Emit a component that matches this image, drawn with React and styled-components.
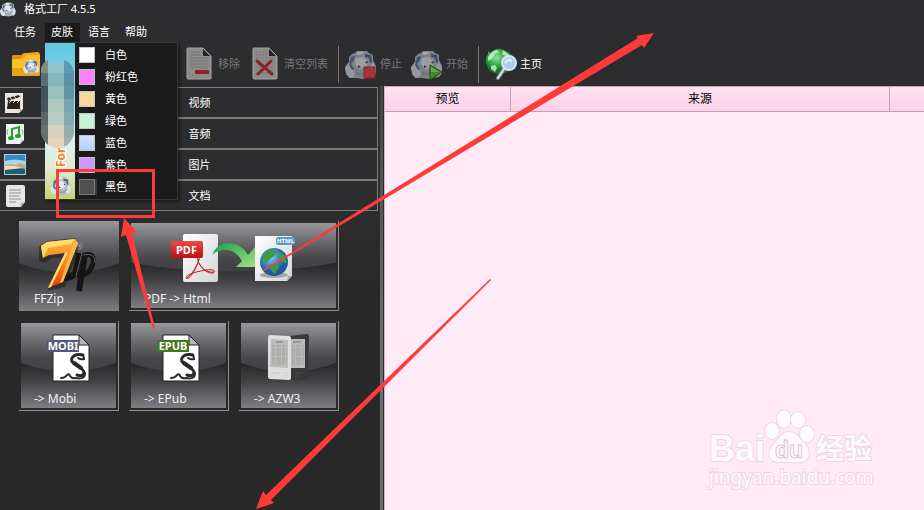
import React, {useState} from 'react'
import styled, {createGlobalStyle, css} from 'styled-components';

const GlobalStyle = createGlobalStyle`
  * {
    box-sizing: border-box;
  }
  body {
    margin: 0;
    background: #2d2d2f;
    font-family: "Noto Sans", "Noto Sans CJK SC", sans-serif;
    font-size: 11px;
    line-height: 16px;
    color: #fff;
  }
  button {
    margin: 0;
    padding: 0;
    border: none;
    background: none;
    color: inherit;
    font: inherit;
    text-align: left;
  }
  svg {
    display: block;
    flex: none;
    overflow: visible;
  }
`

const Window = styled.div`
  position: relative;
  display: flex;
  flex-direction: column;
  min-height: 100vh;
  overflow: hidden;
`
const TitleBar = styled.header`
  display: flex;
  align-items: center;
  gap: 7px;
  height: 18px;
`
const Title = styled.h1`
  margin: 0;
  font-size: 11px;
  font-weight: normal;
`
const MenuBar = styled.nav`
  display: flex;
  height: 24px;
  padding: 5px 0 0 8px;
`
const MenuSlot = styled.div`
  position: relative;
`
const MenuButton = styled.button`
  height: 19px;
  padding: 0 7px 2px 6px;
  margin-right: 2px;
  ${(props) => props.$open && css`
    background: #1b1b1b;
  `}
`
const SkinMenu = styled.div`
  position: absolute;
  z-index: 2;
  top: 19px;
  left: 0;
  display: flex;
  width: 133px;
  background: #1b1b1b;
  border: 1px solid #37373b;
  border-width: 1px 1px 1px 0;
  box-shadow: 2px 2px 3px rgba(0, 0, 0, 0.4);
`
const SkinItems = styled.div`
  flex: 1;
  padding: 1px 0;
`
const SkinItem = styled.button`
  display: flex;
  align-items: center;
  gap: 10px;
  width: 100%;
  height: 22px;
  padding-left: 4px;
`
const Swatch = styled.span`
  width: 16px;
  height: 16px;
  border: 1px solid #c4c4c4;
  background: ${(props) => props.$fill};
  ${(props) => props.$selected && css`
    border-color: #7a7a7a;
    box-shadow: 2px 0 0 #3a3a3a;
  `}
`
const ToolBar = styled.div`
  display: flex;
  align-items: center;
  height: 44px;
  padding-left: 7px;
`
const ToolButton = styled.button`
  display: flex;
  align-items: center;
  gap: 3px;
  padding: 0 6px 0 3px;
  white-space: nowrap;
  &:disabled {
    color: #77777a;
  }
`
const OutputButton = styled(ToolButton)`
  width: 173px;
`
const Separator = styled.span`
  width: 1px;
  height: 37px;
  margin: 0 3px 0 4px;
  background: #77777a;
`
const Main = styled.div`
  display: flex;
  flex: 1;
`
const Side = styled.aside`
  flex: none;
  padding: 1px 2px 0 0;
  width: 380px;
  background: linear-gradient(#2d2d2f 120px, #292929 200px);
`
const Category = styled.button`
  display: grid;
  grid-template-columns: 1fr 1fr;
  align-items: center;
  width: 100%;
  height: 31px;
  border: 1px solid #7c7c7c;
  border-left: none;
`
const CategoryIcon = styled.span`
  padding-left: 4px;
`
const Tiles = styled.div`
  display: grid;
  grid-template-columns: repeat(3, 100px);
  grid-auto-rows: 90px;
  gap: 10px;
  padding: 10px 0 10px 19px;
`
const Tile = styled.button`
  display: flex;
  padding: 2px;
  border: solid #8f8f93;
  border-width: 0 1px 1px 0;
  grid-column: span ${(props) => props.$span || 1};
  ${(props) => props.$active && css`
    padding: 0;
    border: none;
  `}
`
const Face = styled.span`
  position: relative;
  display: flex;
  flex: 1;
  flex-direction: column;
  justify-content: space-between;
  align-self: stretch;
  background: linear-gradient(#2a2a2c 50%, #424245 68%, #7e7e83);
  &::before {
    content: '';
    position: absolute;
    inset: 0;
    background: linear-gradient(#98989c, #6a6a6f 22%, #46464a 42%, #404044 60%);
    clip-path: ellipse(87% 57% at 50% 0);
  }
  svg {
    position: relative;
  }
`
const TileLabel = styled.span`
  position: relative;
  font-size: 12px;
  color: #f0f0f0;
  padding: 0 0 ${(props) => (props.$active ? '4px 15px' : '1px 13px')};
`
const Splitter = styled.div`
  flex: none;
  width: 4px;
  background: linear-gradient(#454547, #6e6e6e 60%);
  border-right: 1px solid #2b2b2b;
`
const Content = styled.main`
  position: relative;
  flex: 1;
  background: #ffeaf6;
  border-left: 1px solid #d9b3c8;
`
const TaskTable = styled.table`
  width: 100%;
  table-layout: fixed;
  border-collapse: separate;
  border-spacing: 0;
`
const Th = styled.th`
  width: ${(props) => props.$width || 'auto'};
  height: 26px;
  padding: 0;
  border: solid #c3a0b3;
  border-width: 1px 1px 1px 0;
  background: linear-gradient(#ffe2f2, #f9d1e6);
  color: #000;
  font-size: 12px;
  font-weight: normal;
  text-align: center;
  &:last-child {
    border-right: none;
  }
`
const Watermark = styled.svg`
  position: absolute;
  right: 34px;
  bottom: 10px;
`
const Blur = styled.svg`
  position: absolute;
  z-index: 3;
  top: 37px;
  left: -4px;
`
const Marks = styled.svg`
  position: absolute;
  z-index: 4;
  top: 0;
  left: 0;
  pointer-events: none;
`

function Mascot({x = 0, y = 0, scale = 1, dim}) {
    return (
        <g transform={`translate(${x} ${y}) scale(${scale})`} opacity={dim ? 0.6 : 1}>
            <path d="M7 4 10 3 12 1 22 1 24 3 28 5 28 10 31 16 31 23 28 27 21 28 18 29 11 28 4 28 1 24 0 17 4 12 4 7Z" fill="#b4bac5" />
            <path d="M4 12 0 18 2 25 7 28 10 24 7 18Z M28 12 31 18 30 24 26 27 23 23 25 17Z" fill="#dfe2e8" />
            <path d="M6 7 10 6 9 10 6 14 9 19 7 20 4 15Z" fill="#4d6f94" />
            <path d="M20 4 26 5 27 12 25 13 24 8 20 7Z" fill="#45648a" />
            <path d="M11 8 18 7 23 12 21 18 14 19 10 14Z" fill="#e8eaee" />
            <path d="M10 21 15 23 21 22 25 18 26 20 21 25 11 25Z" fill="#98a0ae" />
            <path d="M12 2 19 2 17 4 12 5Z" fill="#f8f8fa" />
            <path d="M20 12 23 11 22 14Z M13 15 16 17 13 18Z" fill="#333b45" />
        </g>
    )
}

function AppIcon() {
    return (
        <svg width="17" height="17" viewBox="0 0 17 17">
            <Mascot x={0} y={1} scale={0.5} />
        </svg>
    )
}

function FolderIcon() {
    return (
        <svg width="32" height="32" viewBox="0 0 32 32">
            <path d="M2 8 3 7H11L14 9V28H2Z" fill="#e08b13" />
            <path d="M12 6 15 5H17L27 4Q30 4 30 7V26L4 28Z" fill="#f3a51d" />
            <path d="M2 12Q2 11 4 11H13L17 7H28Q30 7 30 9V26Q30 28 28 28H3Q2 28 2 26Z" fill="#f9c12c" />
            <path d="M2 20H30V26Q30 28 28 28H3Q2 28 2 26Z" fill="#eaa40f" />
            <Mascot x={13} y={11} scale={0.52} />
        </svg>
    )
}

function RemoveIcon() {
    return (
        <svg width="32" height="32" viewBox="0 0 32 32">
            <path d="M5 0H20L28 8V30Q28 31 27 31H5Q4 31 4 30V1Q4 0 5 0Z" fill="#8b8b8c" stroke="#a5a5a5" />
            <path d="M7 4H18M7 7H18M7 10H25M7 13H25M7 16H25M7 19H25" stroke="#757577" />
            <path d="M20 1V8H27Z" fill="#222" />
            <rect x="12" y="22" width="14" height="4" fill="#8c2429" />
        </svg>
    )
}

function ClearIcon() {
    return (
        <svg width="32" height="32" viewBox="0 0 32 32">
            <path d="M5 0H20L28 8V30Q28 31 27 31H5Q4 31 4 30V1Q4 0 5 0Z" fill="#8b8b8c" stroke="#a5a5a5" />
            <path d="M7 4H18M7 7H18M7 10H25M7 13H25M7 16H25M7 19H25M7 22H25M7 25H25" stroke="#757577" strokeDasharray="2 1" />
            <path d="M20 1V8H27Z" fill="#222" />
            <path d="M8 13 23 26M22 13 9 26" stroke="#8c2227" strokeWidth="3" strokeLinecap="round" />
        </svg>
    )
}

function StopIcon() {
    return (
        <svg width="32" height="32" viewBox="0 0 32 32">
            <Mascot y={2} dim />
            <rect x="19" y="19" width="11" height="11" fill="#a73338" stroke="#852529" />
        </svg>
    )
}

function StartIcon() {
    return (
        <svg width="32" height="32" viewBox="0 0 32 32">
            <Mascot y={2} dim />
            <path d="M19 17V32L31 24Z" fill="#3d8f24" stroke="#1d4a14" />
            <path d="M20 19V24H28Z" fill="#6aab4a" />
        </svg>
    )
}

function HomeIcon() {
    return (
        <svg width="32" height="32" viewBox="0 0 32 32">
            <defs>
                <radialGradient id="home" cx="40%" cy="35%">
                    <stop offset="0" stopColor="#8fe29a" />
                    <stop offset="0.6" stopColor="#2fae48" />
                    <stop offset="1" stopColor="#17712c" />
                </radialGradient>
            </defs>
            <path d="M3 3 6 5Q10 0 16 1L24 4Q29 8 28 14 27 24 17 26 5 27 2 18 -1 11 3 6Z" fill="url(#home)" />
            <path d="M3 9Q6 3 12 2L14 4 10 6 7 11 3 13ZM18 2 25 7 22 9 17 6ZM6 18 10 17 12 20 10 24 6 21Z" fill="#d4f5d4" opacity="0.75" />
            <path d="M13 30 19 21" stroke="#7d858c" strokeWidth="4" strokeLinecap="round" />
            <path d="M13 30 19 21" stroke="#d8dde0" strokeWidth="2" strokeLinecap="round" />
            <circle cx="24" cy="15" r="7" fill="#a9cdf0" stroke="#dfe4e8" strokeWidth="2" />
            <path d="M20 15Q23 10 27 13" stroke="#e6f3ff" strokeWidth="2" fill="none" />
        </svg>
    )
}

function VideoIcon() {
    return (
        <svg width="24" height="24" viewBox="0 0 24 24">
            <path d="M1 2H19V18L15 22H1Z" fill="#e9e6e2" />
            <path d="M3 7 15 4 16 6 4 10Z" fill="#33291f" />
            <path d="M4 10H16V18H3Z" fill="#2b211b" />
            <path d="M6 6 8 9M10 5 12 8M5 12 7 10M9 12 11 10M13 12 15 10" stroke="#ddd" />
            <path d="M15 22 16 18H19Z" fill="#bdb8b2" />
        </svg>
    )
}

function AudioIcon() {
    return (
        <svg width="24" height="24" viewBox="0 0 24 24">
            <path d="M2 2H20V18L16 22H2Z" fill="#f2f5f1" />
            <path d="M8 16V7L15 5V14" stroke="#28a032" strokeWidth="2" fill="none" />
            <ellipse cx="7" cy="16" rx="3" ry="2" fill="#28a032" />
            <ellipse cx="14" cy="14" rx="3" ry="2" fill="#28a032" />
            <path d="M4 7Q2 10 4 13M18 7Q20 10 18 13" stroke="#6dc673" fill="none" />
            <path d="M16 22 17 18H20Z" fill="#bcc2ba" />
        </svg>
    )
}

function PictureIcon() {
    return (
        <svg width="24" height="24" viewBox="0 0 24 24">
            <rect x="0" y="1" width="22" height="21" fill="#b9c9d0" />
            <rect x="1" y="2" width="20" height="10" fill="#2d8dcc" />
            <path d="M1 8Q10 5 21 8V12H1Z" fill="#a6d8ef" />
            <path d="M1 12 6 11 12 12 17 10 21 12V16H1Z" fill="#c6a970" />
            <path d="M1 14Q12 13 21 16V21H1Z" fill="#1b5f70" />
            <path d="M1 13Q9 12 19 15L1 17Z" fill="#f1deb0" />
        </svg>
    )
}

function DocIcon() {
    return (
        <svg width="24" height="24" viewBox="0 0 24 24">
            <path d="M4 1H19Q21 1 21 3V18L17 23H4Q2 23 2 21V3Q2 1 4 1Z" fill="#e6e6e6" />
            <path d="M5 6H17M5 9H17M5 12H15M5 15H17M5 18H12" stroke="#929292" />
            <path d="M16 23 17 19 21 18Z" fill="#a9a9a9" />
        </svg>
    )
}

function MenuBanner() {
    return (
        <svg width="30" height="156" viewBox="0 0 30 156">
            <defs>
                <linearGradient id="banner" x2="0" y2="1">
                    <stop offset="0" stopColor="#5fc8e2" />
                    <stop offset="0.3" stopColor="#8ad6e8" />
                    <stop offset="0.6" stopColor="#dceff3" />
                    <stop offset="0.8" stopColor="#e0ebd2" />
                    <stop offset="1" stopColor="#c2d869" />
                </linearGradient>
            </defs>
            <rect width="30" height="156" fill="url(#banner)" />
            <text transform="translate(20 124) rotate(-90)" fontSize="12" fontWeight="bold" fill="#f5821f" stroke="#fff" strokeWidth="2" paintOrder="stroke">For</text>
            <Mascot x={5} y={133} scale={0.68} />
        </svg>
    )
}

function MosaicPatch() {
    const cells = [
        ['#7d8d84', '#8ec3c9', '#5f9bae'],
        ['#586f76', '#86b7bb', '#5b8fa3'],
        ['#40525c', '#97c1bd', '#6294a4'],
        ['#45555b', '#adcabf', '#78a5ad'],
        ['#5a6869', '#b9cdc0', '#84a9b0'],
        ['#69706e', '#d7d2bf', '#95adb3'],
        ['#697173', '#e5d3bd', '#a2afb5'],
    ];
    const xs = [0, 7, 23];
    const widths = [7, 16, 10];
    return (
        <Blur width="33" height="88" viewBox="0 0 33 88">
            <clipPath id="patch">
                <path d="M0 8Q2 2 7 0V3H23V0Q31 2 33 12V74Q29 88 16 88Q4 87 0 74Z" />
            </clipPath>
            <g clipPath="url(#patch)">
                {cells.map((row, r) => row.map((fill, c) => (
                    <rect key={`${r}-${c}`} x={xs[c]} y={r * 13} width={widths[c]} height="13" fill={fill} />
                )))}
            </g>
        </Blur>
    )
}

function ZipArt() {
    return (
        <svg width="100" height="67" viewBox="0 0 100 67">
            <defs>
                <linearGradient id="seven" x2="0" y2="1">
                    <stop offset="0" stopColor="#fbb040" />
                    <stop offset="0.5" stopColor="#f68a1e" />
                    <stop offset="1" stopColor="#e2390f" />
                </linearGradient>
            </defs>
            <path d="M60 32 57 50Q54 58 42 57" fill="none" stroke="#151515" strokeWidth="6" />
            <path d="M66 33 60 70" stroke="#151515" strokeWidth="6" />
            <path d="M62 35Q76 30 74 42Q71 55 58 54" fill="none" stroke="#151515" strokeWidth="5" />
            <path d="M63 32 57 55M64 34Q77 31 76 42" fill="none" stroke="#66605c" />
            <circle cx="60" cy="25" r="4" fill="#77797b" />
            <circle cx="59" cy="24" r="2" fill="#c9cbcc" />
            <path d="M20 40V26L28 20 56 17 61 23 46 66 28 70 44 37 33 37 26 42Z" fill="#171717" opacity="0.5" />
            <path d="M22 25 28 21 56 18 59 22 44 61 29 67 46 32 30 34 24 37Z" fill="url(#seven)" />
            <path d="M22 25 28 21 56 18 52 23 29 27 24 37Z" fill="#fddc6b" />
            <path d="M56 18 59 22 44 61 41 62Z" fill="#f9b74b" />
            <path d="M46 32 49 31 32 66 29 67Z" fill="#fde07a" />
        </svg>
    )
}

function PdfHtmlArt() {
    return (
        <svg width="205" height="66" viewBox="2 2 205 66">
            <defs>
                <linearGradient id="sheet" x2="1" y2="1">
                    <stop offset="0" stopColor="#fff" />
                    <stop offset="1" stopColor="#d3d4d6" />
                </linearGradient>
                <linearGradient id="red" x2="0" y2="1">
                    <stop offset="0" stopColor="#ee4b48" />
                    <stop offset="1" stopColor="#b90f12" />
                </linearGradient>
                <linearGradient id="green" x2="1" y2="1">
                    <stop offset="0" stopColor="#16a04b" />
                    <stop offset="1" stopColor="#a2e07f" />
                </linearGradient>
                <radialGradient id="globe" cx="40%" cy="35%">
                    <stop offset="0" stopColor="#82c5ef" />
                    <stop offset="1" stopColor="#1c5b9c" />
                </radialGradient>
            </defs>
            <rect x="54" y="13" width="35" height="48" rx="2" fill="url(#sheet)" />
            <path d="M57 57C60 60 68 47 70 38C70 35 68 36 69 40C71 46 78 53 84 52C88 50 84 48 78 49C70 50 57 53 57 57Z" fill="none" stroke="#bd1f25" strokeWidth="1" />
            <path d="M58 57C62 55 69 44 70 38M70 42C73 48 79 52 85 51" fill="none" stroke="#bd1f25" strokeWidth="1" />
            <rect x="42" y="20" width="32" height="17" rx="2" fill="url(#red)" />
            <text x="47" y="33" fontSize="11" fontWeight="bold" fill="#fff">PDF</text>
            <path d="M83 34Q88 22 99 22Q112 22 119 34L126 26V46H107L113 40Q107 30 99 29Q90 28 83 34Z" fill="url(#green)" />
            <path d="M126 15H163V55L158 60H126Z" fill="url(#sheet)" />
            <path d="M158 60 159 55H163Z" fill="#a8a8aa" />
            <ellipse cx="145" cy="54" rx="14" ry="3" fill="#a4a6a9" />
            <circle cx="145" cy="41" r="14" fill="url(#globe)" />
            <path d="M134 34 141 28 148 30 145 35 140 39 137 42 133 39ZM141 44 147 43 150 46 146 53 143 51ZM151 31 156 34 158 42 153 41 149 37Z" fill="#3d9b46" />
            <rect x="147" y="16" width="19" height="8" rx="2" fill="#5c9bc6" />
            <text x="148" y="22" fontSize="6" fontWeight="bold" fill="#fff">HTML</text>
        </svg>
    )
}

function BookArt({name, fill}) {
    return (
        <svg width="95" height="66" viewBox="2 2 95 66">
            <path d="M34 14H60L70 24V60H34Z" fill="#fff" stroke="#222" strokeWidth="1" />
            <path d="M60 14V24H70Z" fill="#b5b5b5" stroke="#222" />
            <rect x="28" y="19" width="32" height="12" fill={fill} />
            <text x="44" y="29" fontSize="11" fontWeight="bold" textAnchor="middle" fill="#fff">{name}</text>
            <g fill="none" stroke="#2a2a2a" strokeLinecap="round">
                <path d="M64 34Q56 32 53 37Q51 40 57 44Q65 48 65 52Q64 56 58 54" strokeWidth="3" />
                <path d="M60 33Q65 33 65 38Q62 39 59 37" strokeWidth="2" />
                <path d="M42 57Q46 57 48 54Q50 52 51 55Q53 58 57 57Q66 59 66 52" strokeWidth="2" />
                <path d="M55 42 62 47" strokeWidth="4" />
            </g>
        </svg>
    )
}

function ReaderArt() {
    const lines = [25, 28, 30, 32, 34, 37, 39, 41, 43];
    return (
        <svg width="95" height="66" viewBox="2 2 95 66">
            <path d="M51 15 68 13Q70 13 70 16L69 57Q69 59 66 59H51Z" fill="#38383a" />
            <rect x="52" y="18" width="14" height="29" fill="#b9b9b7" />
            <path d="M31 14 50 15Q52 15 52 17V57Q52 59 50 59L31 58Q29 58 29 56V16Q29 14 31 14Z" fill="#dededf" />
            <path d="M32 18 49 19V47L31 46Z" fill="#bcbcba" />
            {lines.map((y) => (
                <path key={y} d={`M33 ${y}H48M53 ${y}H65`} stroke="#a0a09e" strokeDasharray="3 1 5 1" />
            ))}
            <path d="M37 21H44M54 21H62" stroke="#77777a" />
            <path d="M32 52H41M45 52H49M45 55H49" stroke="#cbcbcd" />
            <path d="M56 52H64M56 55H62" stroke="#4b4b4e" />
        </svg>
    )
}

function BaiduMark() {
    return (
        <Watermark width="200" height="100" viewBox="0 0 200 100">
            <g fill="#fffafd" stroke="#ecd6e3" strokeWidth="2" paintOrder="stroke">
                <text x="19" y="61" fontFamily="Liberation Sans, sans-serif" fontSize="36" fontWeight="bold">Bai</text>
                <ellipse cx="82" cy="31" rx="7" ry="8" />
                <ellipse cx="94" cy="19" rx="7" ry="9" />
                <ellipse cx="108" cy="20" rx="7" ry="8" />
                <ellipse cx="117" cy="34" rx="7" ry="8" />
                <path d="M99 32C106 32 109 38 114 43C121 49 121 61 111 62C104 63 95 61 90 62C78 63 77 51 83 45C89 39 91 32 99 32Z" />
                <text x="126" y="59" fontSize="28" fontWeight="bold">经验</text>
                <text x="19" y="84" fontSize="19">jingyan.baidu.com</text>
            </g>
            <text x="85" y="58" fontFamily="Liberation Sans, sans-serif" fontSize="23" fontWeight="bold" fill="#fffafd" stroke="#dcc3d1" strokeWidth="1">du</text>
        </Watermark>
    )
}

function ArrowMarks() {
    return (
        <Marks width="924" height="510" viewBox="0 0 924 510" aria-hidden="true">
            <g fill="#ff3b38">
                <path d="M56 169H155V218H56ZM59 172V215H152V172Z" fillRule="evenodd" />
                <path d="M124 218 137 232 132 233 155 328 153 329 126 235 121 237Z" />
                <path d="M654 33 644 48 642 45 264 271 263 270 638 38 636 36Z" />
                <path d="M256 509 263 491 266 495 490 279 491 280 271 500 274 503Z" />
            </g>
        </Marks>
    )
}

const skins = [
    ["白色", "#ffffff"],
    ["粉红色", "#ff80ff"],
    ["黄色", "#f5d89c"],
    ["绿色", "#c8f2d4"],
    ["蓝色", "linear-gradient(#d2e4ff, #b0d0fa)"],
    ["紫色", "#cc99ff"],
    ["黑色", "#505050"],
];

const categories = [
    ["视频", VideoIcon],
    ["音频", AudioIcon],
    ["图片", PictureIcon],
    ["文档", DocIcon],
];

export default function App() {

    const [skin, setSkin] = useState("黑色");

    return (
        <Window>
            <GlobalStyle />
            <TitleBar>
                <AppIcon />
                <Title>格式工厂 4.5.5</Title>
            </TitleBar>
            <MenuBar>
                <MenuButton>任务</MenuButton>
                <MenuSlot>
                    <MenuButton $open aria-expanded="true">皮肤</MenuButton>
                    <SkinMenu>
                        <MenuBanner />
                        <SkinItems>
                            {skins.map(([name, fill]) => (
                                <SkinItem key={name} onClick={() => setSkin(name)}>
                                    <Swatch $fill={fill} $selected={skin === name} />
                                    {name}
                                </SkinItem>
                            ))}
                        </SkinItems>
                    </SkinMenu>
                    <MosaicPatch />
                </MenuSlot>
                <MenuButton>语言</MenuButton>
                <MenuButton>帮助</MenuButton>
            </MenuBar>
            <ToolBar>
                <OutputButton aria-label="输出文件夹"><FolderIcon /></OutputButton>
                <ToolButton disabled><RemoveIcon />移除</ToolButton>
                <ToolButton disabled><ClearIcon />清空列表</ToolButton>
                <Separator />
                <ToolButton disabled><StopIcon />停止</ToolButton>
                <ToolButton disabled><StartIcon />开始</ToolButton>
                <Separator />
                <ToolButton><HomeIcon />主页</ToolButton>
            </ToolBar>
            <Main>
                <Side>
                    {categories.map(([name, Icon]) => (
                        <Category key={name}>
                            <CategoryIcon><Icon /></CategoryIcon>
                            {name}
                        </Category>
                    ))}
                    <Tiles>
                        <Tile $active>
                            <Face>
                                <ZipArt />
                                <TileLabel $active>FFZip</TileLabel>
                            </Face>
                        </Tile>
                        <Tile $span={2}>
                            <Face>
                                <PdfHtmlArt />
                                <TileLabel>{'PDF -> Html'}</TileLabel>
                            </Face>
                        </Tile>
                        <Tile>
                            <Face>
                                <BookArt name="MOBI" fill="#55567a" />
                                <TileLabel>{'-> Mobi'}</TileLabel>
                            </Face>
                        </Tile>
                        <Tile>
                            <Face>
                                <BookArt name="EPUB" fill="#43761d" />
                                <TileLabel>{'-> EPub'}</TileLabel>
                            </Face>
                        </Tile>
                        <Tile>
                            <Face>
                                <ReaderArt />
                                <TileLabel>{'-> AZW3'}</TileLabel>
                            </Face>
                        </Tile>
                    </Tiles>
                </Side>
                <Splitter />
                <Content>
                    <TaskTable>
                        <thead>
                            <tr>
                                <Th $width="126px">预览</Th>
                                <Th>来源</Th>
                                <Th $width="34px" aria-label="状态" />
                            </tr>
                        </thead>
                    </TaskTable>
                    <BaiduMark />
                </Content>
            </Main>
            <ArrowMarks />
        </Window>
    )
}
